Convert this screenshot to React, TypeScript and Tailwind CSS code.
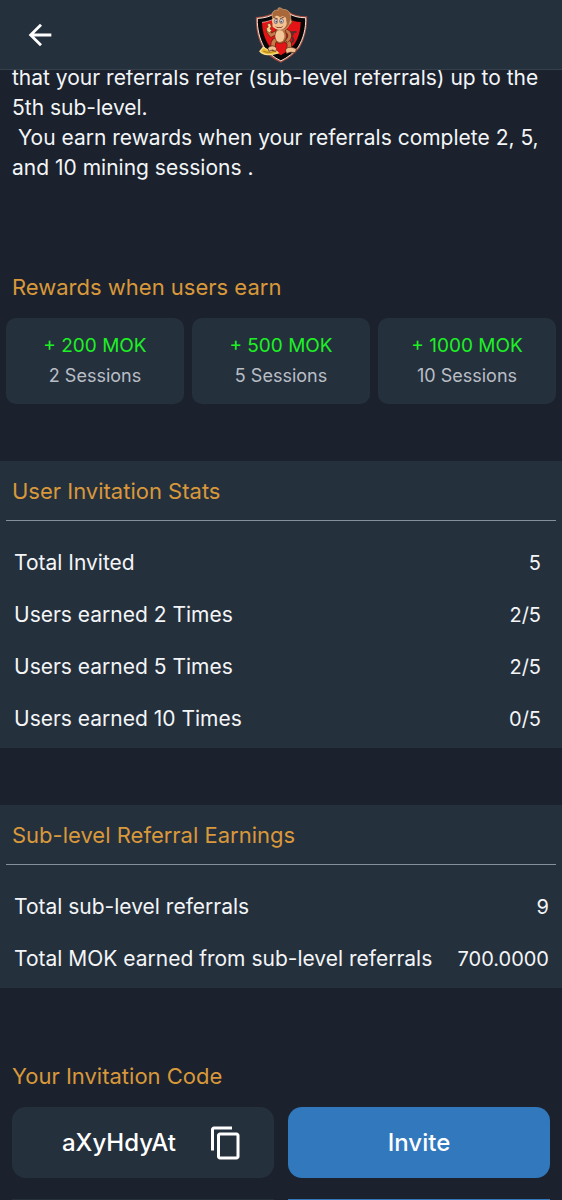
import { useState } from "react";
import { MdArrowBack, MdContentCopy } from "react-icons/md";

const REWARDS = [
  { amount: "+ 200 MOK", sessions: "2 Sessions" },
  { amount: "+ 500 MOK", sessions: "5 Sessions" },
  { amount: "+ 1000 MOK", sessions: "10 Sessions" },
];

const INVITATION_STATS = [
  { label: "Total Invited", value: "5" },
  { label: "Users earned 2 Times", value: "2/5" },
  { label: "Users earned 5 Times", value: "2/5" },
  { label: "Users earned 10 Times", value: "0/5" },
];

const SUB_LEVEL_STATS = [
  { label: "Total sub-level referrals", value: "9" },
  { label: "Total MOK earned from sub-level referrals", value: "700.0000" },
];

const INTRO = `that your referrals refer (sub-level referrals) up to the
5th sub-level.
 You earn rewards when your referrals complete 2, 5,
and 10 mining sessions .`;

const INVITE_CODE = "aXyHdyAt";

function Logo() {
  return (
    <svg viewBox="45 18 160 168" className="h-14 w-[53px]" role="img" aria-label="MOK">
      {/* shield */}
      <path
        d="M50 50C72 49 91 44 106 34H146C160 43 177 48 200 48C201 83 193 113 178 139C164 157 143 173 123 183C102 174 82 157 70 139C57 115 49 84 50 50Z"
        fill="#080606"
        stroke="#a64b3c"
        strokeWidth="5"
      />
      <path
        d="M52 52C74 51 92 46 107 36H145C159 45 176 50 198 50C199 83 191 112 176 138C163 155 143 171 123 180C103 171 84 155 72 138C59 114 51 84 52 52Z"
        fill="#080606"
        stroke="#f4e8e0"
        strokeWidth="3"
      />
      <path d="M66 64C82 62 94 58 105 52H145C156 59 167 62 183 63C182 91 176 112 164 129C152 144 138 155 123 163C108 156 94 145 85 131C73 111 67 89 66 64Z" fill="#e31316" />
      <path d="M66 64C82 62 94 58 105 52" fill="none" stroke="#f3d5cd" strokeWidth="2" />
      {/* tail */}
      <path d="M141 125C155 130 165 121 158 110C151 101 143 108 148 115M150 94L168 93M160 97L151 111" fill="none" stroke="#62282e" strokeWidth="6" strokeLinecap="round" />
      {/* banana pile */}
      <path d="M60 151C70 163 93 164 115 156L104 145L91 151L70 139Z" fill="#e9b92e" stroke="#f6df89" strokeWidth="4" />
      <path d="M70 151C81 156 94 155 105 151" fill="none" stroke="#8b601c" strokeWidth="2" />
      {/* legs */}
      <path d="M110 116C99 119 98 130 101 143M137 117C151 122 151 135 145 148" fill="none" stroke="#542415" strokeWidth="15" strokeLinecap="round" />
      <path d="M110 116C99 119 98 130 101 143M137 117C151 122 151 135 145 148" fill="none" stroke="#c67a48" strokeWidth="11" strokeLinecap="round" />
      <path d="M84 142C90 132 105 133 110 142L108 152L98 147L87 151ZM137 147C143 136 157 138 170 144L167 155L151 154L140 158Z" fill="#efc08f" stroke="#542415" strokeWidth="2" />
      {/* arms */}
      <path d="M113 92L94 103L85 91M137 89C152 94 154 108 143 118" fill="none" stroke="#542415" strokeWidth="12" strokeLinecap="round" strokeLinejoin="round" />
      <path d="M113 92L94 103L85 91M137 89C152 94 154 108 143 118" fill="none" stroke="#c67a48" strokeWidth="9" strokeLinecap="round" strokeLinejoin="round" />
      {/* body */}
      <path d="M109 84C105 101 106 118 113 126C127 131 139 121 141 105L136 84Z" fill="#b56b3c" stroke="#542415" strokeWidth="2" />
      <ellipse cx="120" cy="105" rx="14" ry="18" fill="#f2c697" />
      {/* raised hand */}
      <path d="M82 69L91 67L94 76L90 84L96 88L89 95L81 91L80 81L85 78Z" fill="#f0d890" stroke="#6c3d1c" strokeWidth="2" />
      {/* head */}
      <circle cx="149" cy="62" r="8" fill="#e8a873" stroke="#7a3d20" strokeWidth="3" />
      <path d="M99 54C92 36 101 24 116 27C109 18 123 18 130 25C147 23 156 40 152 58C148 80 137 89 121 88L99 77Z" fill="#a9683a" stroke="#d9ac80" strokeWidth="2" />
      <path d="M102 49C110 41 117 44 120 49C131 41 142 48 139 59C145 71 135 85 121 86C106 86 95 77 99 68C94 60 97 53 102 49Z" fill="#f3c293" />
      <path d="M101 49L114 54M121 53L134 47" stroke="#6b4129" strokeWidth="3" />
      <ellipse cx="108" cy="61" rx="5" ry="7" fill="#c8c7ce" stroke="#655665" strokeWidth="2" />
      <ellipse cx="125" cy="60" rx="6" ry="7" fill="#c8c7ce" stroke="#655665" strokeWidth="2" />
      <circle cx="109" cy="62" r="2" fill="#222" />
      <circle cx="124" cy="62" r="2" fill="#222" />
      <path d="M105 75C113 81 124 80 131 73L126 79C119 83 109 81 105 75Z" fill="#692c22" />
    </svg>
  );
}

interface StatsPanelProps {
  id: string;
  title: string;
  rows: { label: string; value: string }[];
  valueClass: string;
}

function StatsPanel({ id, title, rows, valueClass }: StatsPanelProps) {
  return (
    <section className="mt-[57px] bg-[#25303d] pb-[3px]">
      <h2 id={id} className="px-3 pt-3.5 pb-[13px] text-[22px] leading-8 text-[#d9983a]">
        {title}
      </h2>
      <div className="mx-1.5 border-t border-[#84919b]" />
      <table aria-labelledby={id} className="mt-4 w-full text-[#f3f5f7]">
        <tbody>
          {rows.map((row) => (
            <tr key={row.label} className="h-[52px]">
              <th scope="row" className="pl-3.5 text-left text-[21px] font-normal whitespace-nowrap">
                {row.label}
              </th>
              <td className={`text-right text-xl ${valueClass}`}>{row.value}</td>
            </tr>
          ))}
        </tbody>
      </table>
    </section>
  );
}

export default function App() {
  const [copied, setCopied] = useState(false);

  const copyCode = () => {
    navigator.clipboard?.writeText(INVITE_CODE).then(() => setCopied(true));
  };

  return (
    <div className="min-h-screen bg-[#1b222e] font-['Inter',sans-serif] text-[#f3f5f7]">
      <header className="sticky top-0 z-10 grid h-[70px] grid-cols-3 items-center border-b border-[#34404c] bg-[#25303d] px-[23px]">
        <button type="button" aria-label="Back" className="justify-self-start text-white">
          <MdArrowBack className="size-[34px]" />
        </button>
        <div className="justify-self-center">
          <Logo />
        </div>
      </header>

      <main>
        <p className="-mt-[7px] px-3 text-[21px] leading-[30px] whitespace-pre-wrap">{INTRO}</p>

        <section className="mt-[88px]">
          <h2 className="px-3 text-[22px] leading-8 text-[#d9983a]">Rewards when users earn</h2>
          <div className="mt-[15px] grid grid-cols-3 gap-2 px-1.5">
            {REWARDS.map((reward) => (
              <div key={reward.sessions} className="rounded-[10px] bg-[#25303d] py-[13px] text-center">
                <p className="text-[19px] leading-[30px] text-[#1df024]">{reward.amount}</p>
                <p className="text-lg leading-[30px] text-[#b9bec5]">{reward.sessions}</p>
              </div>
            ))}
          </div>
        </section>

        <StatsPanel id="invitation-stats" title="User Invitation Stats" rows={INVITATION_STATS} valueClass="pr-[21px]" />
        <StatsPanel id="sub-level" title="Sub-level Referral Earnings" rows={SUB_LEVEL_STATS} valueClass="pr-[13px]" />

        <section className="mt-[72px] px-3">
          <h2 className="text-[22px] leading-8 text-[#d9983a]">Your Invitation Code</h2>
          <div className="mt-[15px] grid grid-cols-2 gap-3.5 text-2xl font-medium text-white">
            <div className="flex h-[71px] items-center justify-end gap-8 rounded-[14px] bg-[#25303d] pr-[30px]">
              <span>{INVITE_CODE}</span>
              <button type="button" aria-label="Copy invitation code" aria-pressed={copied} onClick={copyCode}>
                <MdContentCopy className="size-9" />
              </button>
            </div>
            <button type="button" className="h-[71px] rounded-[14px] bg-[#3178bc]">
              Invite
            </button>
          </div>
          <div className="mt-[21px] grid grid-cols-2 gap-3.5">
            <div className="h-px bg-[#25303d]" />
            <div className="h-px bg-[#3178bc]" />
          </div>
        </section>
      </main>
    </div>
  );
}
